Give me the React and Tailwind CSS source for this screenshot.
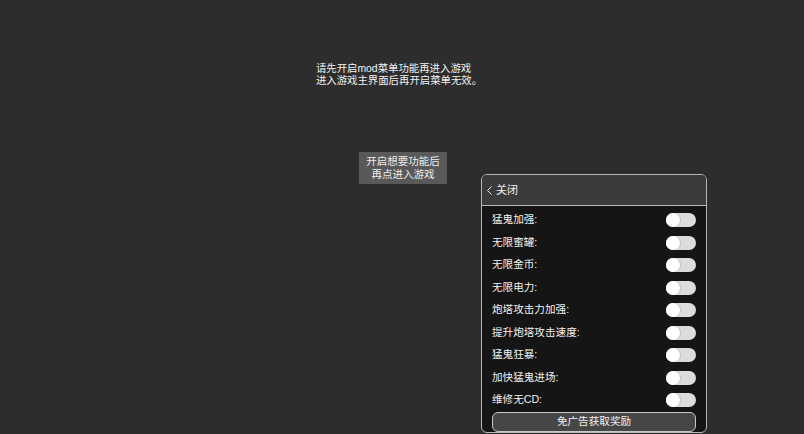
import React from 'react';

const items = [
  '猛鬼加强:',
  '无限蜜罐:',
  '无限金币:',
  '无限电力:',
  '炮塔攻击力加强:',
  '提升炮塔攻击速度:',
  '猛鬼狂暴:',
  '加快猛鬼进场:',
  '维修无CD:',
];

const Toggle = () => (
  <div className="w-[30px] h-[14px] rounded-full bg-[#dcdcdc] flex items-center">
    <div className="w-[14px] h-[14px] rounded-full bg-white shadow-[1px_0_1px_rgba(0,0,0,0.12)]" />
  </div>
);

const App = () => (
  <div
    className="relative w-full h-[434px] overflow-hidden bg-[#2d2d2d] text-white"
    style={{ fontFamily: '"Liberation Sans", "Noto Sans CJK SC", sans-serif' }}
  >
    <div className="flex flex-col items-center pt-[63px]">
      <div className="text-[10.4px] leading-[12px] text-[#f2f2f2] ml-[-6px]">
        <div>请先开启mod菜单功能再进入游戏</div>
        <div>进入游戏主界面后再开启菜单无效。</div>
      </div>
      <div className="mt-[65px] ml-[2px] w-[88px] h-[32px] bg-[#595959] flex flex-col items-center justify-center text-[10.5px] leading-[13px] text-[#eeeeee]">
        <div>开启想要功能后</div>
        <div>再点进入游戏</div>
      </div>
    </div>

    {/* floating mod menu */}
    <div className="absolute left-[481px] top-[174px] w-[226px] h-[259px] rounded-[6px] border-[1.5px] border-[#b5b5b5] bg-[#151515] overflow-hidden flex flex-col">
      <div className="h-[31px] shrink-0 bg-[#3b3b3b] border-b-[1.5px] border-[#b8b8b8] flex items-center pl-[3px] text-[11px] text-[#f2f2f2]">
        <svg width="9" height="11" viewBox="0 0 9 11" className="mr-[2px]">
          <path d="M6.5 1.5 L2.5 5.5 L6.5 9.5" fill="none" stroke="#e8e8e8" strokeWidth="1" />
        </svg>
        <span>关闭</span>
      </div>
      <div className="flex flex-col pt-[3px]">
        {items.map((t) => (
          <div key={t} className="h-[22.5px] flex items-center justify-between pl-[10px] pr-[10px]">
            <span className="text-[10.6px] text-[#f2f2f2]">{t}</span>
            <Toggle />
          </div>
        ))}
      </div>
      <div className="mt-0 mx-[10px] h-[20px] shrink-0 rounded-[6px] border border-[#c8c8c8] bg-[#464646] flex items-center justify-center text-[10.6px] text-[#f2f2f2]">
        免广告获取奖励
      </div>
    </div>
  </div>
);

export default App;
